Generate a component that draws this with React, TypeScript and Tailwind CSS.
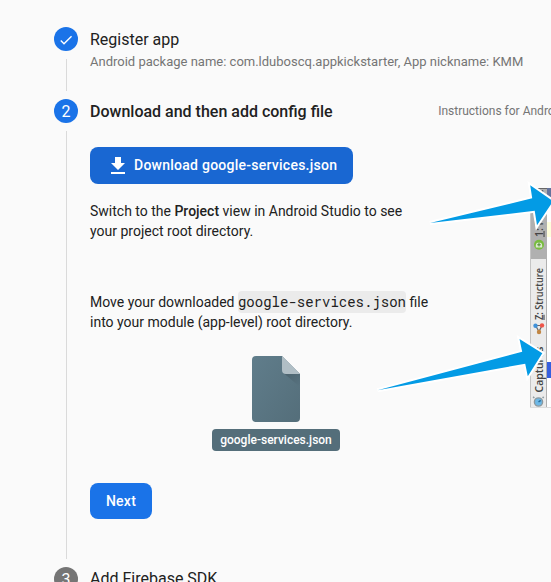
import type { ReactNode } from "react";

type StepProps = {
  badge: ReactNode;
  muted?: boolean;
  line?: boolean;
  className: string;
  children: ReactNode;
};

function Step({ badge, muted, line = true, className, children }: StepProps) {
  return (
    <section className={`flex shrink-0 gap-3 ${className}`}>
      <div className="flex w-6 shrink-0 flex-col items-center gap-2 pb-2">
        <div
          className={`flex size-6 shrink-0 items-center justify-center rounded-full pt-px text-base leading-6 text-white ${
            muted ? "bg-[#757575]" : "bg-[#1a73e8]"
          }`}
        >
          {badge}
        </div>
        {line && <div className="ml-px w-px flex-1 bg-[#dadada]" />}
      </div>
      <div className="flex min-w-0 flex-1 flex-col">{children}</div>
    </section>
  );
}

function StudioIllustration() {
  return (
    <svg
      className="h-[220px] w-[21px] shrink-0 overflow-visible"
      viewBox="530 188 21 220"
      fontFamily="'Open Sans', 'Noto Sans', sans-serif"
    >
      <rect x="530" y="188" width="21" height="220" fill="#fff" />
      <rect x="530" y="188" width="16.5" height="71" fill="#b0b0b0" />
      <rect x="530" y="259" width="16.5" height="149" fill="#ebebeb" />
      <rect x="530" y="188" width="1" height="220" fill="#c4c4c4" />
      <rect x="546" y="188" width="1" height="220" fill="#b0b0b0" />
      <rect x="530" y="188" width="21" height="1" fill="#666" />
      <rect x="547" y="188" width="4" height="10" fill="#64739d" />
      <rect x="547" y="222" width="4" height="15" fill="#ffffdc" />
      <rect x="547" y="362" width="4" height="16" fill="#365fdf" />
      <rect x="530" y="407" width="21" height="1" fill="#ddd" />

      <text transform="translate(542.5 237) rotate(-90)" fontSize="10.5" fontWeight="600" fill="#444">
        <tspan textDecoration="underline">1</tspan>: Project
      </text>
      <circle cx="539" cy="244.8" r="5" fill="#78bd3d" />
      <path d="M535.8 247.5v-1.8a3.2 3.2 0 0 1 6.4 0v1.8z" fill="#dce9cf" />
      <path d="M539 242.5v4M537.2 244.8h3.6" stroke="#4d8b30" strokeWidth="1" />

      <text
        transform="translate(542.5 320) rotate(-90)"
        fontSize="10.5"
        fontWeight="600"
        fill="#444"
        textLength="52"
        lengthAdjust="spacingAndGlyphs"
      >
        <tspan textDecoration="underline">Z</tspan>: Structure
      </text>
      <path d="M535.5 325.5h6.5l-3 6z" fill="none" stroke="#666" strokeWidth="1.2" />
      <circle cx="535.5" cy="325.7" r="2.2" fill="#3f91d9" />
      <circle cx="542" cy="325.4" r="2.2" fill="#ef5549" />
      <circle cx="539" cy="332" r="2.2" fill="#c18643" />

      <text transform="translate(542.5 392.5) rotate(-90)" fontSize="10.5" fontWeight="600" fill="#444">
        Captures
      </text>
      <circle cx="538.5" cy="402" r="4.1" fill="#6db8e6" stroke="#8b989e" strokeWidth="1.4" />
      <path d="M534.3 398l-1.2-1.2M542.6 398l1.1-1.1" stroke="#8b989e" strokeWidth="1.5" />
      <path d="M538.5 402l2.2-1.7" stroke="#276c9a" strokeWidth="1.5" />

      <g fill="#039be5" stroke="#fff" strokeWidth="4" paintOrder="stroke">
        <path d="M430 222.9L532.2 198.3L530.2 185.3L553 201.2L537 225.2L534.7 210.8Z" />
        <path d="M377.5 390.2L522.2 351.7L519.5 338.9L542.3 353.3L527.8 376.2L525.2 363.7Z" />
      </g>
    </svg>
  );
}

function FileIcon() {
  return (
    <svg className="h-[66px] w-12" viewBox="0 0 48 66">
      <defs>
        <linearGradient id="paper" x1="0" y1="0" x2="1" y2="1">
          <stop offset="0" stopColor="#607d8b" />
          <stop offset="1" stopColor="#546e7a" />
        </linearGradient>
        <linearGradient id="fold-shade" x1="0" y1="0" x2="1" y2="1">
          <stop offset="0" stopColor="#4b626d" />
          <stop offset="1" stopColor="#587380" />
        </linearGradient>
      </defs>
      <path
        d="M4 0h26l18 18v44a4 4 0 0 1-4 4H4a4 4 0 0 1-4-4V4a4 4 0 0 1 4-4z"
        fill="url(#paper)"
      />
      <path d="M31.2 16.8L48 31V18H34z" fill="url(#fold-shade)" />
      <path d="M30 0l18 18H34a4 4 0 0 1-4-4z" fill="#b0bec5" />
    </svg>
  );
}

export default function App() {
  return (
    <main className="flex h-[582px] w-[551px] flex-col overflow-hidden bg-[#fafafa] pt-[27px] pl-[54px] font-[Roboto,sans-serif] text-[#212121]">
      <Step
        className="h-[72px]"
        badge={
          <svg className="size-4" viewBox="0 0 24 24" fill="currentColor">
            <path d="M9 16.17L4.83 12l-1.42 1.41L9 19 21 7l-1.41-1.41z" />
          </svg>
        }
      >
        <h2 className="pt-px text-base leading-6">Register app</h2>
        <p className="text-[13px] leading-5 whitespace-nowrap text-[#757575]">
          Android package name: com.lduboscq.appkickstarter, App nickname: KMM
        </p>
      </Step>

      <Step className="h-[468px]" badge="2">
        <div className="flex h-6 items-center gap-[105.5px] whitespace-nowrap">
          <h2 className="pt-0.5 text-base leading-6 font-medium">Download and then add config file</h2>
          <span className="text-xs text-[#757575]">Instructions for Android Studio</span>
        </div>
        <div className="flex pt-6">
          <div className="flex w-[440px] shrink-0 flex-col items-start text-sm leading-5">
            <button className="flex h-[37px] w-[263px] items-center gap-1 rounded-lg bg-[#1967d2] pl-4 text-sm font-medium tracking-[0.25px] whitespace-nowrap text-white">
              <svg className="size-6" viewBox="0 0 24 24" fill="currentColor">
                <path d="M19 9h-4V3H9v6H5l7 7 7-7zM5 18v2h14v-2H5z" />
              </svg>
              <span className="pb-0.5">Download google-services.json</span>
            </button>
            <p className="mt-[17px] w-[338px]">
              Switch to the <b className="font-medium">Project</b> view in Android Studio to see
              <br />
              your project root directory.
            </p>
            <p className="mt-[51px] whitespace-nowrap">
              Move your downloaded{" "}
              <code className="rounded bg-[#ebebeb] pt-px pb-0.5 font-['Roboto_Mono','DejaVu_Sans_Mono',monospace] text-sm">
                google-services.json
              </code>{" "}
              file
              <br />
              into your module (app-level) root directory.
            </p>
            <div className="mt-6 ml-[122px] flex w-32 flex-col items-center gap-[7px]">
              <FileIcon />
              <span className="flex h-[22px] w-32 items-center justify-center rounded bg-[#546e7a] text-xs font-medium text-white">
                google-services.json
              </span>
            </div>
            <button className="mt-8 h-9 w-[62px] rounded-lg bg-[#1a73e8] text-sm font-medium tracking-[0.25px] text-white">
              Next
            </button>
          </div>
          <div className="mt-[41px]">
            <StudioIllustration />
          </div>
        </div>
      </Step>

      <Step className="h-[72px]" badge="3" muted line={false}>
        <h2 className="text-base leading-6">Add Firebase SDK</h2>
      </Step>
    </main>
  );
}
